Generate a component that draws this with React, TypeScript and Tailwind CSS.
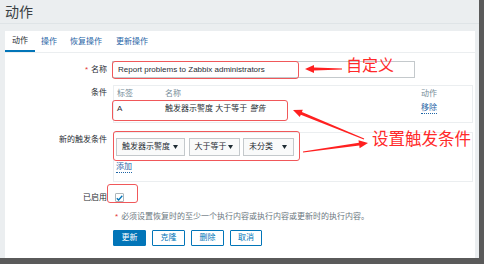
import React from "react";

function arrowPoints(tx: number, ty: number, hx: number, hy: number) {
  const dx = hx - tx;
  const dy = hy - ty;
  const len = Math.sqrt(dx * dx + dy * dy);
  const ux = dx / len;
  const uy = dy / len;
  const nx = -uy;
  const ny = ux;
  const headLen = 9;
  const headW = 4;
  const bx = hx - ux * headLen;
  const by = hy - uy * headLen;
  const t0 = 0.5;
  const t1 = 1.4;
  const pts = [
    [tx + nx * t0, ty + ny * t0],
    [bx + nx * t1, by + ny * t1],
    [bx + nx * headW, by + ny * headW],
    [hx, hy],
    [bx - nx * headW, by - ny * headW],
    [bx - nx * t1, by - ny * t1],
    [tx - nx * t0, ty - ny * t0],
  ];
  return pts.map((p) => `${p[0].toFixed(1)},${p[1].toFixed(1)}`).join(" ");
}

function Caret() {
  return (
    <svg width="5" height="4" viewBox="0 0 5 4" className="shrink-0">
      <polygon points="0,0 5,0 2.5,4" fill="#1f2c33" />
    </svg>
  );
}

function Select({ w, label }: { w: string; label: string }) {
  return (
    <div
      className={`${w} h-[18px] border border-[#c4c9cc] bg-[#f9fafa] flex items-center justify-between pl-[5px] pr-[6px] text-[8px] text-[#1f2c33] leading-none`}
    >
      <span>{label}</span>
      <Caret />
    </div>
  );
}

export default function App() {
  return (
    <div className="relative w-[484px] h-[264px] bg-[#5a5a5a] overflow-hidden font-[family-name:'Liberation_Sans','Noto_Sans_CJK_SC',sans-serif]">
      <div className="w-[479px] h-[258px] bg-[#ebeef0] flex flex-col">
        <div className="h-[24px] shrink-0 px-[5px] flex items-center text-[14px] leading-none text-[#3a3f43] border-b border-[#dfe4e7]">
          动作
        </div>
        <div className="mt-[7px] ml-[5px] mr-[4px] flex-1 bg-white flex flex-col">
          {/* tabs */}
          <div className="h-[22px] shrink-0 flex border-b border-[#ebeef0] text-[8px] leading-none">
            <div className="px-[7px] flex items-center border-b-2 border-[#0275b8] text-[#1f2c33]">动作</div>
            <div className="px-[6px] flex items-center text-[#1f65a6]">操作</div>
            <div className="px-[7px] flex items-center text-[#1f65a6]">恢复操作</div>
            <div className="px-[7px] flex items-center text-[#1f65a6]">更新操作</div>
          </div>

          <div className="flex flex-col text-[8px] leading-none text-[#1f2c33]">
            {/* name row */}
            <div className="mt-[8px] flex items-center gap-[5px]">
              <div className="w-[102px] text-right">
                <span className="text-[#e33734] mr-[3px]">*</span>名称
              </div>
              <div className="w-[303px] h-[17px] border border-[#c4c9cc] flex items-center pl-[5px] text-[8px]">
                Report problems to Zabbix administrators
              </div>
            </div>

            {/* conditions row */}
            <div className="mt-[7px] flex items-start gap-[6px]">
              <div className="w-[102px] text-right leading-[16px]">条件</div>
              <div className="w-[360px] h-[38px] border border-[#ebeef0] flex flex-col pt-[2px] pl-[3px]">
                <div className="h-[11px] flex items-center text-[#768d99]">
                  <div className="w-[48px]">标签</div>
                  <div className="w-[256px]">名称</div>
                  <div>动作</div>
                </div>
                <div className="h-[20px] flex items-center">
                  <div className="w-[48px]">A</div>
                  <div className="w-[256px]">
                    触发器示警度 大于等于 <span className="italic">警告</span>
                  </div>
                  <div className="text-[#1f65a6] border-b border-dotted border-[#1f65a6] pb-[1px]">移除</div>
                </div>
              </div>
            </div>

            {/* new trigger condition row */}
            <div className="mt-[9px] flex items-start gap-[6px]">
              <div className="w-[102px] text-right leading-[16px]">新的触发条件</div>
              <div className="w-[360px] h-[50px] border border-[#ebeef0] flex flex-col pt-[5px] pl-[2px]">
                <div className="flex gap-[3.5px]">
                  <Select w="w-[69px]" label="触发器示警度" />
                  <Select w="w-[51px]" label="大于等于" />
                  <Select w="w-[51px]" label="未分类" />
                </div>
                <div className="mt-[7px] flex">
                  <span className="text-[#1f65a6] border-b border-dotted border-[#1f65a6] pb-[1px]">添加</span>
                </div>
              </div>
            </div>

            {/* enabled row */}
            <div className="mt-[11px] flex items-center gap-[8px]">
              <div className="w-[102px] text-right">已启用</div>
              <div className="w-[9px] h-[9px] border border-[#aeb6ba] rounded-[1px] flex items-center justify-center bg-white">
                <svg width="7" height="6" viewBox="0 0 7 6">
                  <polyline points="0.8,3.2 2.6,5 6.3,0.8" fill="none" stroke="#0275b8" strokeWidth="1.3" />
                </svg>
              </div>
            </div>

            {/* note */}
            <div className="mt-[11px] flex gap-[6px]">
              <div className="w-[102px]" />
              <div className="text-[#6b7780] pl-[2px]">
                <span className="text-[#e33734] mr-[3px]">*</span>必须设置恢复时的至少一个执行内容或执行内容或更新时的执行内容。
              </div>
            </div>

            {/* buttons */}
            <div className="mt-[9px] flex gap-[6px]">
              <div className="w-[102px]" />
              <div className="flex gap-[6px]">
                <div className="w-[33px] h-[16px] flex items-center justify-center bg-[#0275b8] border border-[#0275b8] text-white rounded-[1px]">更新</div>
                <div className="w-[33px] h-[16px] flex items-center justify-center border border-[#0275b8] text-[#0275b8] rounded-[1px]">克隆</div>
                <div className="w-[33px] h-[16px] flex items-center justify-center border border-[#0275b8] text-[#0275b8] rounded-[1px]">删除</div>
                <div className="w-[32px] h-[16px] flex items-center justify-center border border-[#0275b8] text-[#0275b8] rounded-[1px]">取消</div>
              </div>
            </div>
          </div>
        </div>
      </div>

      {/* annotation overlay */}
      <div className="absolute left-[112px] top-[61px] w-[187px] h-[18px] border-[1.5px] border-[#f0585a] rounded-[3px]" />
      <div className="absolute left-[112px] top-[100px] w-[176px] h-[21px] border-[1.5px] border-[#f0585a] rounded-[3px]" />
      <div className="absolute left-[113px] top-[131px] w-[187px] h-[30px] border-[1.5px] border-[#f0585a] rounded-[3px]" />
      <div className="absolute left-[107px] top-[184px] w-[31px] h-[19px] border-[1.5px] border-[#f0585a] rounded-[3px]" />

      <svg className="absolute left-0 top-0" width="484" height="264" viewBox="0 0 484 264">
        <polygon points={arrowPoints(342, 69, 305, 69)} fill="#ff2020" />
        <polygon points={arrowPoints(364, 139, 293, 110)} fill="#ff2020" />
        <polygon points={arrowPoints(303, 152, 368, 143)} fill="#ff2020" />
      </svg>

      <div className="absolute left-[346px] top-[56px] text-[16px] leading-none text-[#ff2a2a] font-[family-name:'Noto_Sans_CJK_SC',sans-serif]">
        自定义
      </div>
      <div className="absolute left-[372px] top-[130px] text-[16.5px] leading-none text-[#ff2a2a] font-[family-name:'Noto_Sans_CJK_SC',sans-serif]">
        设置触发条件
      </div>
    </div>
  );
}
